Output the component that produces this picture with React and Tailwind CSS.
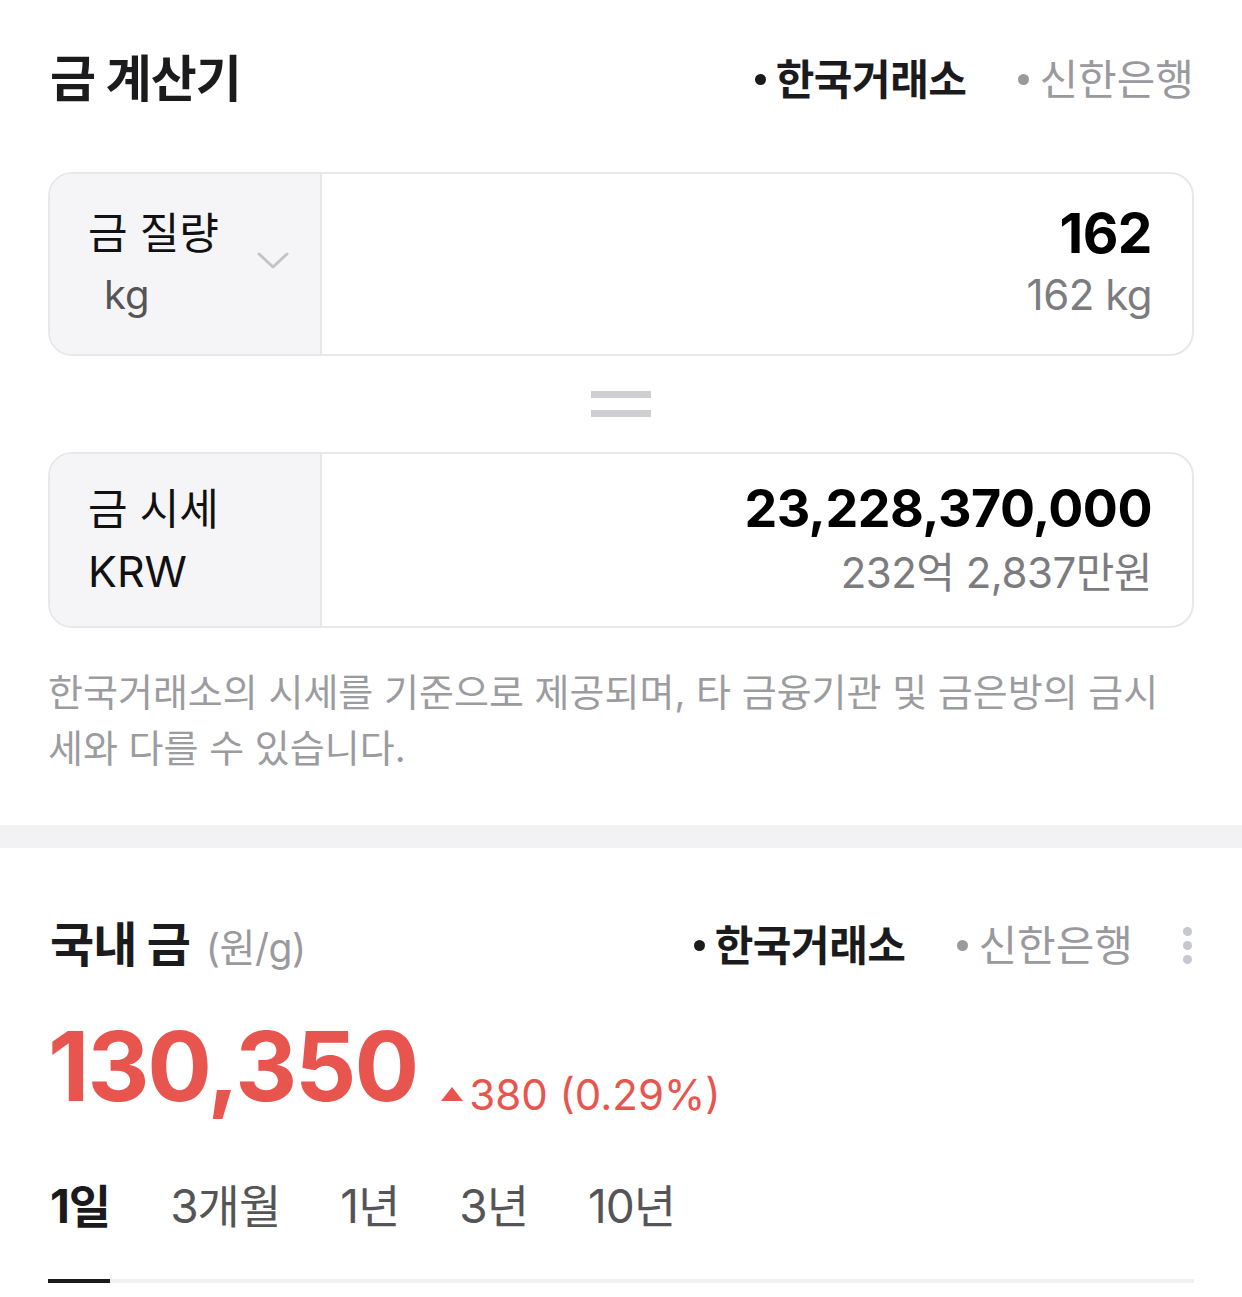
import React from "react";

const font = { fontFamily: "Inter, 'Noto Sans CJK KR', sans-serif" };

function SourceTabs() {
  return (
    <div className="flex items-center gap-x-[52px] text-[42px]">
      <div className="flex items-center gap-x-[10px] font-bold text-[#1b1b1d] tracking-[-0.5px]">
        <span className="w-[11px] h-[11px] rounded-full bg-[#1b1b1d]" />
        한국거래소
      </div>
      <div className="flex items-center gap-x-[10px] text-[#9a9a9e]">
        <span className="w-[11px] h-[11px] rounded-full bg-[#9a9a9e]" />
        신한은행
      </div>
    </div>
  );
}

function CalcBox({ label, unit, unitClass, chevron, value, valueClass, sub, height }) {
  return (
    <div className={`flex ${height} border-2 border-[#e8e8ea] rounded-[24px] overflow-hidden`}>
      <div className="relative w-[272px] shrink-0 bg-[#f5f5f7] border-r-2 border-[#e8e8ea] pl-[38px] flex flex-col justify-center">
        <div className="text-[43px] leading-[62px] text-[#111]">{label}</div>
        <div className={unitClass}>{unit}</div>
        {chevron && (
          <svg className="absolute left-[206px] top-[76px] w-[34px] h-[22px]" viewBox="0 0 34 22" fill="none">
            <path d="M3 4 L17 17 L31 4" stroke="#c4c4c8" strokeWidth="3" strokeLinecap="round" strokeLinejoin="round" />
          </svg>
        )}
      </div>
      <div className="flex-1 flex flex-col items-end justify-center pr-[40px]">
        <div className={valueClass}>{value}</div>
        <div className="text-[42px] leading-[62px] text-[#7c7c80] tracking-[-0.5px]">{sub}</div>
      </div>
    </div>
  );
}

export default function App() {
  return (
    <div className="w-[1242px] h-[1297px] bg-white overflow-hidden" style={font}>
      <div className="px-[48px]">
        <div className="flex items-center justify-between h-[160px] pb-[2px]">
          <h1 className="text-[50px] font-bold text-[#1b1b1d] tracking-[-1px] pl-[2px]">금 계산기</h1>
          <SourceTabs />
        </div>

        <CalcBox
          label="금 질량"
          unit="kg"
          unitClass="text-[40px] leading-[62px] text-[#555] pl-[16px]"
          chevron
          value="162"
          valueClass="text-[55px] leading-[62px] font-bold text-[#000] tracking-[-0.5px]"
          sub="162 kg"
          height="h-[184px] mt-[12px]"
        />

        <div className="flex flex-col items-center gap-y-[12px] h-[96px] justify-center">
          <div className="w-[60px] h-[7px] bg-[#cfcfd3]" />
          <div className="w-[60px] h-[7px] bg-[#cfcfd3]" />
        </div>

        <CalcBox
          label="금 시세"
          unit="KRW"
          unitClass="text-[43px] leading-[62px] text-[#111]"
          value="23,228,370,000"
          valueClass="text-[52px] leading-[66px] font-bold text-[#000] tracking-[-0.5px]"
          sub="232억 2,837만원"
          height="h-[176px]"
        />

        <p className="mt-[36px] text-[38px] leading-[56px] text-[#9c9ca0] tracking-[0px] pr-[10px]">
          한국거래소의 시세를 기준으로 제공되며, 타 금융기관 및 금은방의 금시세와 다를 수 있습니다.
        </p>
      </div>

      <div className="mt-[49px] h-[23px] bg-[#f2f2f4]" />

      <div className="px-[48px]">
        <div className="flex items-center justify-between mt-[67px] h-[60px]">
          <div className="flex items-baseline gap-x-[16px] pl-[2px]">
            <span className="text-[48px] font-bold text-[#1b1b1d] tracking-[-1px]">국내 금</span>
            <span className="text-[39px] text-[#9a9a9e] tracking-[-0.5px]">(원/g)</span>
          </div>
          <div className="flex items-center gap-x-[50px]">
            <SourceTabs />
            <div className="flex flex-col gap-y-[5px] pr-[2px]">
              <span className="w-[9px] h-[9px] rounded-full bg-[#c6c8ce]" />
              <span className="w-[9px] h-[9px] rounded-full bg-[#c6c8ce]" />
              <span className="w-[9px] h-[9px] rounded-full bg-[#c6c8ce]" />
            </div>
          </div>
        </div>

        <div className="flex items-baseline gap-x-[24px] mt-[36px] text-[#e8554e]">
          <span className="text-[96px] leading-[110px] font-bold tracking-[-2px]">130,350</span>
          <span className="flex items-center gap-x-[6px] text-[42px]">
            <svg className="w-[22px] h-[14px]" viewBox="0 0 22 14">
              <path d="M11 0 L22 14 L0 14 Z" fill="#e8554e" />
            </svg>
            380 (0.29%)
          </span>
        </div>

        <div className="flex items-center gap-x-[60px] mt-[46px] text-[46px] tracking-[-1px] text-[#555558] pl-[2px]">
          <span className="font-bold text-[#1b1b1d]">1일</span>
          <span>3개월</span>
          <span>1년</span>
          <span>3년</span>
          <span>10년</span>
        </div>

        <div className="flex mt-[38px] h-[4px] bg-[#f0f0f2]">
          <div className="w-[62px] h-[4px] bg-[#1b1b1d]" />
        </div>
      </div>
    </div>
  );
}
